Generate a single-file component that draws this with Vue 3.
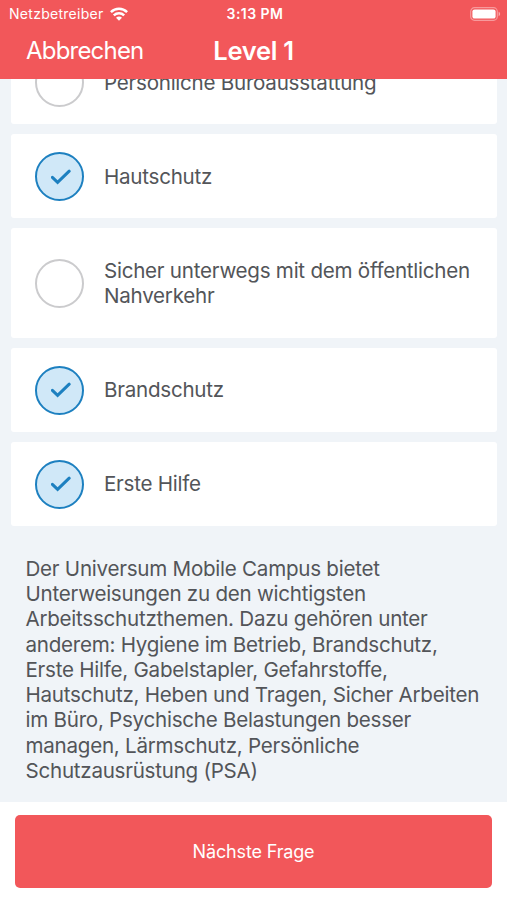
<template>
  <div class="screen">
    <header class="header">
      <div class="status-bar">
        <div class="carrier">
          <span class="carrier-name">Netzbetreiber</span>
          <svg class="wifi" viewBox="0 0 18 14" fill="none" stroke="#fff" stroke-width="2.5">
            <path d="M0.9 5.2C5.5 0.7 12.5 0.7 17.1 5.2" />
            <path d="M3.8 8.3C6.8 5.5 11.2 5.5 14.2 8.3" />
            <path d="M9 13.7L6 10.7C7.7 9.2 10.3 9.2 12 10.7Z" fill="#fff" stroke="none" />
          </svg>
        </div>
        <span class="time">3:13 PM</span>
        <svg class="battery" viewBox="0 0 31 14">
          <rect x="0.7" y="0.7" width="26.6" height="12.6" rx="3.8" fill="none" stroke="#fff" stroke-opacity="0.4" stroke-width="1.2" />
          <rect x="2.4" y="2.4" width="23.2" height="9.2" rx="2.2" fill="#fff" />
          <path d="M28.6 4.8C30.6 5.5 30.6 8.5 28.6 9.2Z" fill="#fff" fill-opacity="0.5" />
        </svg>
      </div>
      <div class="nav-bar">
        <button class="cancel">Abbrechen</button>
        <h1 class="title">Level 1</h1>
      </div>
    </header>

    <main class="content">
      <ul class="answers">
        <li
          v-for="answer in answers"
          :key="answer.text"
          class="answer"
          @click="answer.checked = !answer.checked"
        >
          <span :class="['check', { checked: answer.checked }]">
            <svg v-if="answer.checked" viewBox="0 0 20 16">
              <path d="M1.4 8.4L6.6 13.4L18.2 2.2" />
            </svg>
          </span>
          <span class="label">{{ answer.text }}</span>
        </li>
      </ul>
      <p class="explanation">{{ explanation }}</p>
    </main>

    <footer class="footer">
      <button class="next-btn">Nächste Frage</button>
    </footer>
  </div>
</template>

<script setup>
import { ref } from 'vue'

const answers = ref([
  { text: 'Persönliche Büroausstattung', checked: false },
  { text: 'Hautschutz', checked: true },
  { text: 'Sicher unterwegs mit dem öffentlichen Nahverkehr', checked: false },
  { text: 'Brandschutz', checked: true },
  { text: 'Erste Hilfe', checked: true },
])

const explanation = [
  'Der Universum Mobile Campus bietet',
  'Unterweisungen zu den wichtigsten',
  'Arbeitsschutzthemen. Dazu gehören unter',
  'anderem: Hygiene im Betrieb, Brandschutz,',
  'Erste Hilfe, Gabelstapler, Gefahrstoffe,',
  'Hautschutz, Heben und Tragen, Sicher Arbeiten',
  'im Büro, Psychische Belastungen besser',
  'managen, Lärmschutz, Persönliche',
  'Schutzausrüstung (PSA)',
].join('\n')
</script>

<style>
body { margin: 0; background: #fff; }
</style>

<style scoped>
.screen {
  display: flex;
  flex-direction: column;
  height: 900px;
  overflow: hidden;
  font-family: Inter, "Liberation Sans", sans-serif;
  color: #535559;
}

button {
  border: none;
  padding: 0;
  background: transparent;
  font: inherit;
  color: #fff;
  cursor: pointer;
}

.header {
  flex: none;
  height: 79px;
  background: #f2575a;
  color: #fff;
}

.status-bar {
  display: grid;
  grid-template-columns: 1fr auto 1fr;
  align-items: center;
  height: 27px;
  padding: 0 6px 0 9px;
  font-size: 14px;
}

.carrier { display: flex; align-items: center; gap: 6px; }
.carrier-name { letter-spacing: 0.28px; }
.wifi { width: 18px; height: 14px; }
.time { font-weight: 600; letter-spacing: 0.45px; }
.battery { width: 31px; height: 14px; justify-self: end; }

.nav-bar {
  display: grid;
  grid-template-columns: 1fr auto 1fr;
  align-items: center;
  height: 47px;
  padding: 0 26px;
}

.cancel { justify-self: start; font-size: 24px; letter-spacing: -0.8px; }
.title { margin: 0; font-size: 25.5px; font-weight: 600; letter-spacing: -0.3px; }

.content {
  flex: 1;
  min-height: 0;
  overflow: hidden;
  background: #f0f4f8;
}

/* list is scrolled up, its first row runs under the header */
.answers {
  display: flex;
  flex-direction: column;
  gap: 9.9px;
  margin: -38.8px 10px 0 11px;
  padding: 0;
  list-style: none;
}

.answer {
  display: flex;
  align-items: center;
  gap: 20px;
  padding: 29.3px 24px;
  border-radius: 3px;
  background: #fff;
  cursor: pointer;
}

.check {
  display: flex;
  align-items: center;
  justify-content: center;
  flex: none;
  box-sizing: border-box;
  width: 49px;
  height: 49px;
  margin: -12.6px 0 -13.4px;
  border: 2px solid #cbcbcd;
  border-radius: 50%;
}

.check.checked { border-color: #1d80c0; background: #d0e8f8; }
.check svg { width: 20px; height: 16px; margin-left: 2px; }
.check path { fill: none; stroke: #1d80c0; stroke-width: 3; stroke-linecap: round; }

.label, .explanation {
  font-size: 20.6px;
  line-height: 25.25px;
  letter-spacing: -0.26px;
}

.label {
  margin: 0.5px -10px -0.5px 0;
  line-height: 25.5px;
}

.explanation {
  margin: 30.1px 0 0 25.5px;
  white-space: pre;
}

.footer {
  flex: none;
  box-sizing: border-box;
  height: 98px;
  padding: 12.5px 15px 0;
  background: #fff;
}

.next-btn {
  width: 100%;
  height: 73px;
  border-radius: 5px;
  background: #f2575a;
  font-size: 18px;
  letter-spacing: -0.15px;
}
</style>
